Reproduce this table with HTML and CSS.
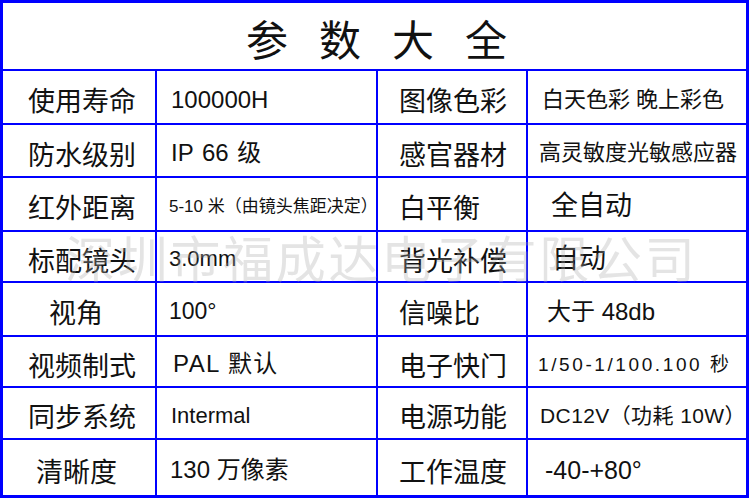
FILE: index.html
```html
<!DOCTYPE html>
<html lang="zh-CN">
<head>
<meta charset="utf-8">
<title>参数大全</title>
<link rel="stylesheet" href="styles.css">
</head>
<body>
<div class="sheet">
  <div class="title">参数大全</div>

  <div class="cell key">使用寿命</div>
  <div class="cell val v-life">100000H</div>
  <div class="cell key2">图像色彩</div>
  <div class="cell val2 s22 p14">白天色彩 晚上彩色</div>

  <div class="cell key">防水级别</div>
  <div class="cell val v-ip">IP 66 级</div>
  <div class="cell key2">感官器材</div>
  <div class="cell val2 s22 p11">高灵敏度光敏感应器</div>

  <div class="cell key">红外距离</div>
  <div class="cell val v-ir">5-10 米（由镜头焦距决定）</div>
  <div class="cell key2">白平衡</div>
  <div class="cell val2 s27 p23">全自动</div>

  <div class="cell key">标配镜头</div>
  <div class="cell val v-lens">3.0mm</div>
  <div class="cell key2">背光补偿</div>
  <div class="cell val2 s27 p24">自动</div>

  <div class="cell key key-angle">视角</div>
  <div class="cell val v-angle">100°</div>
  <div class="cell key2">信噪比</div>
  <div class="cell val2 v-snr">大于 48db</div>

  <div class="cell key">视频制式</div>
  <div class="cell val v-pal">PAL 默认</div>
  <div class="cell key2">电子快门</div>
  <div class="cell val2 v-shutter">1/50-1/100.100 秒</div>

  <div class="cell key">同步系统</div>
  <div class="cell val v-sync">Intermal</div>
  <div class="cell key2">电源功能</div>
  <div class="cell val2 v-power">DC12V（功耗 10W）</div>

  <div class="cell key key-res">清晰度</div>
  <div class="cell val v-res">130 万像素</div>
  <div class="cell key2">工作温度</div>
  <div class="cell val2 v-temp">-40-+80°</div>

  <div class="watermark">深圳市福成达电子有限公司</div>
</div>
</body>
</html>
```

FILE: styles.css
```css
html, body {
  margin: 0;
  padding: 0;
  background: #ffffff;
}

.sheet {
  position: relative;
  width: 749px;
  height: 498px;
  box-sizing: border-box;
  padding: 3px;
  background: #0000ff;
  display: grid;
  grid-template-columns: 152px 219px 148px 218px;
  grid-template-rows: 66px 52px 51px 52px 49px 52px 49px 50px 55px;
  gap: 2px;
  font-family: "Liberation Sans", "Noto Sans CJK SC", sans-serif;
  color: #111111;
  overflow: hidden;
}

.title {
  grid-column: 1 / 5;
  background: #ffffff;
  display: flex;
  align-items: center;
  padding: 4px 0 0 243px;
  font-family: "Noto Sans CJK SC", sans-serif;
  font-size: 42px;
  letter-spacing: 31px;
  line-height: 1;
}

.cell {
  background: #ffffff;
  display: flex;
  align-items: center;
  padding-top: 5px;
  box-sizing: border-box;
  white-space: nowrap;
  line-height: 1;
}

.key, .key2 {
  font-family: "Noto Sans CJK SC", sans-serif;
  font-size: 27px;
}

.key { padding-left: 25px; }
.key-angle { padding-left: 46px; }
.key-res { padding-left: 33px; }
.key2 { padding-left: 21px; }

.val { padding-left: 13px; font-size: 23px; }
.val2 { font-size: 22px; }

.s22 { font-size: 22px; }
.s27 { font-size: 27px; }
.p11 { padding-left: 11px; }
.p14 { padding-left: 14px; }
.p23 { padding-left: 23px; }
.p24 { padding-left: 24px; }

.v-life { font-size: 24px; padding-left: 14px; }
.v-ip { font-size: 24px; padding-left: 14px; word-spacing: 2px; }
.v-ir { font-size: 17px; padding-left: 12px; }
.v-lens { font-size: 22px; padding-left: 12px; }
.v-angle { font-size: 23px; padding-left: 12px; }
.v-pal { font-size: 24px; padding-left: 16px; letter-spacing: 1.4px; }
.v-sync { font-size: 22px; padding-left: 14px; }
.v-res { font-size: 24px; padding-left: 13px; }

.v-snr { font-size: 24px; padding-left: 19px; }
.v-shutter { font-size: 19px; padding-left: 10px; letter-spacing: 2.6px; }
.v-power { font-size: 21px; padding-left: 12px; letter-spacing: 0.4px; }
.v-temp { font-size: 25px; padding-left: 17px; }

.watermark {
  position: absolute;
  left: 65px;
  top: 229px;
  font-family: "Noto Sans CJK SC", sans-serif;
  font-size: 50px;
  letter-spacing: 2.7px;
  line-height: 1.1;
  color: rgba(170, 170, 170, 0.32);
  white-space: nowrap;
  pointer-events: none;
}
```
